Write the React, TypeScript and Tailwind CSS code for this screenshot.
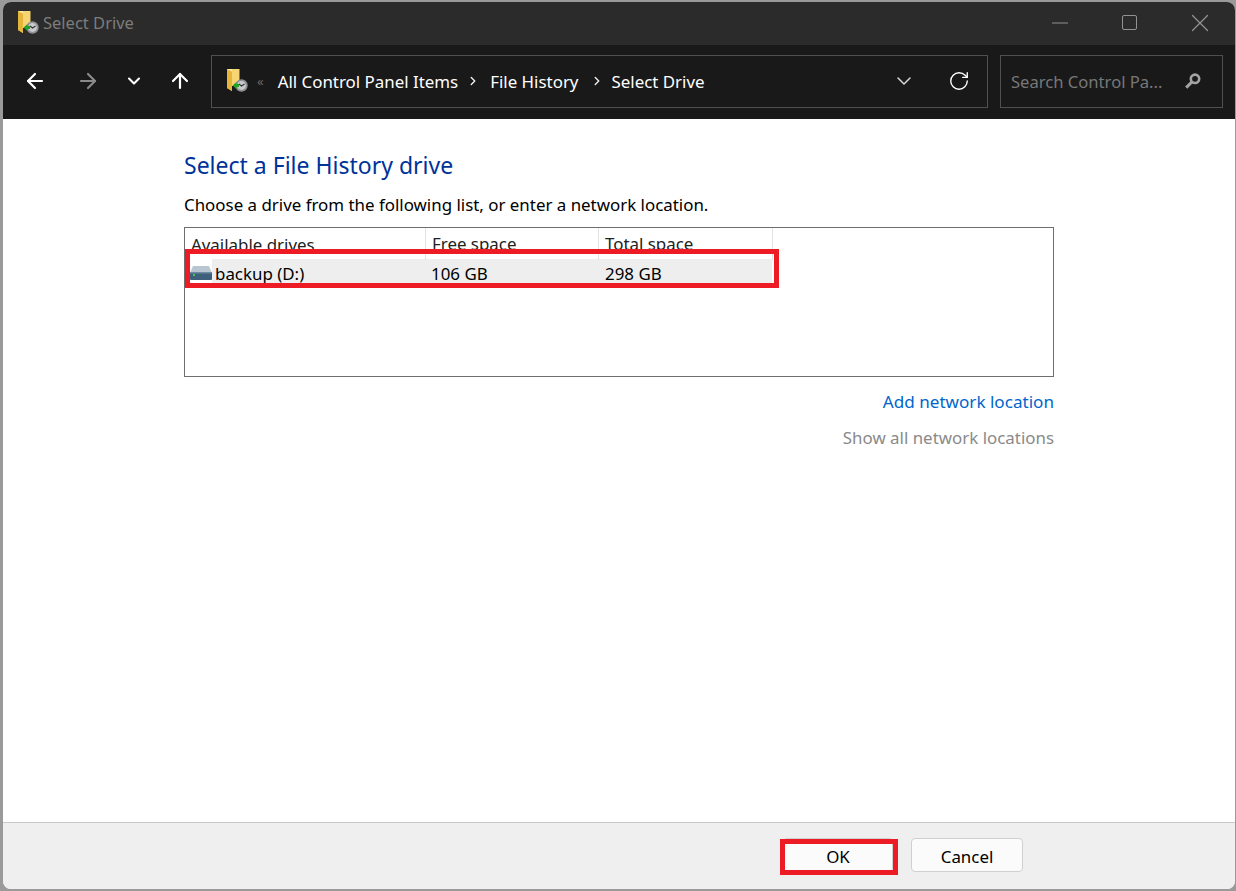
import { ArrowLeft, ArrowRight, ArrowUp, ChevronDown, ChevronRight, RotateCw, Minus, X } from "lucide-react";

// folder with the green arrow and clock badge used by File History
function HistoryFolder() {
  return (
    <svg width="26" height="26" viewBox="0 0 26 26" className="shrink-0">
      <path d="M1 1h12.5v17H6v5l-5-3z" fill="#f6d572" />
      <path d="M1 1l5 2.5V23l-5-3z" fill="#e6b53c" />
      <path d="M1 1h5v2.5z" fill="#fbe9a8" />
      <circle cx="15.5" cy="17.5" r="6.2" fill="#8f9194" />
      <circle cx="15.5" cy="17.5" r="4.4" fill="#c9cacc" />
      <path d="M13 16l2.5 2 3-2" stroke="#333" strokeWidth="1.1" fill="none" />
      <path d="M6.5 17.5l4-3.6v2h2.5v3.2h-2.5v2z" fill="#23a323" />
    </svg>
  );
}

function DriveIcon() {
  return (
    <svg width="24" height="16" viewBox="0 0 24 16" className="shrink-0">
      <path d="M4 1h16l3 7H1z" fill="#b9c6d2" />
      <rect x="1" y="7" width="22" height="8" rx="1" fill="#3f5f7d" />
      <rect x="1" y="7" width="22" height="1.5" fill="#6e8aa3" />
      <rect x="4" y="9" width="2" height="2" fill="#35d04a" />
    </svg>
  );
}

function SearchGlass() {
  return (
    <svg width="18" height="18" viewBox="0 0 18 18" className="shrink-0">
      <circle cx="11" cy="6.8" r="4.2" stroke="#a3a3a3" strokeWidth="2.6" fill="none" />
      <path d="M7.8 10L2.2 15.6" stroke="#a3a3a3" strokeWidth="3" />
    </svg>
  );
}

function DriveRow() {
  return (
    <div className="grid h-[29px] grid-cols-[240px_173px_174px] items-center">
      <div className="flex items-center pl-[4px]">
        <DriveIcon />
        <span className="ml-[2px]">backup (D:)</span>
      </div>
      <span className="pl-[6px]">106 GB</span>
      <span className="pl-[7px]">298 GB</span>
    </div>
  );
}

export default function App() {
  return (
    <div className="relative h-[891px] w-[1236px] overflow-hidden bg-[#9a9a9a] pb-[2px] pl-[3px] pr-px pt-[2px] font-['Noto_Sans',sans-serif] text-[16.9px] text-black">
      <div className="flex h-[887px] flex-col overflow-hidden rounded-lg bg-white">
        {/* Title bar */}
        <div className="flex h-[43px] shrink-0 items-center bg-[#2b2b2b] pb-[2px]">
          <div className="ml-[14px]">
            <HistoryFolder />
          </div>
          <span className="pt-[2px] text-[16.5px] text-[#7c7c7c]">Select Drive</span>
          <div className="ml-auto flex items-center text-[#929292]">
            <Minus size={26} strokeWidth={1} className="mr-[49px]" />
            <span className="mr-[48px] h-[15px] w-[15px] rounded-[2px] border border-[#929292]" />
            <X size={30} strokeWidth={1} className="mr-[20px]" />
          </div>
        </div>

        {/* Toolbar */}
        <div className="flex h-[74px] shrink-0 items-center bg-[#191919] pb-[2px] pl-[20px] pr-[12px] text-white">
          <ArrowLeft size={24} strokeWidth={2.2} />
          <ArrowRight size={24} strokeWidth={2.2} className="ml-[29px] text-[#8a8a8a]" />
          <ChevronDown size={20} strokeWidth={2.5} className="ml-[24px]" />
          <ArrowUp size={24} strokeWidth={2.2} className="ml-[24px]" />
          <div className="ml-[19px] flex h-[53px] w-[777px] items-center border border-[#4f4f4f] pl-[14px]">
            <HistoryFolder />
            <span className="ml-[5px] text-[13px] leading-none text-[#6a6a6a]">«</span>
            <span className="ml-[14px] pt-[2px]">All Control Panel Items</span>
            <ChevronRight size={14} strokeWidth={2.5} className="ml-[8px] text-[#e8e8e8]" />
            <span className="ml-[10px] pt-[2px]">File History</span>
            <ChevronRight size={14} strokeWidth={2.5} className="ml-[12px] text-[#e8e8e8]" />
            <span className="ml-[7px] pt-[2px]">Select Drive</span>
            <ChevronDown size={24} strokeWidth={1.5} className="ml-auto text-[#d8d8d8]" />
            <RotateCw size={22} strokeWidth={1.5} className="ml-[32px] mr-[17px]" />
          </div>
          <div className="ml-[12px] flex h-[53px] flex-1 items-center justify-between border border-[#4f4f4f] pl-[10px] pr-[20px] text-[16.6px] text-[#777777]">
            <span className="pt-[2px]">Search Control Pa...</span>
            <SearchGlass />
          </div>
        </div>

        {/* Content */}
        <div className="flex flex-1 flex-col pl-[181px] pt-[28px]">
          <h1 className="text-[23px] leading-[36px] text-[#003399]">Select a File History drive</h1>
          <p className="mt-[10px] leading-[24px]">Choose a drive from the following list, or enter a network location.</p>

          <div className="mt-[10px] h-[150px] w-[870px] overflow-hidden border border-[#6e6e6e]">
            <div className="grid h-[31px] grid-cols-[240px_173px_175px] items-center text-[#222]">
              <span className="pl-[6px] pt-[1px]">Available drives</span>
              <span className="h-full border-l border-[#e3e3e3] pl-[6px] leading-[32px]">Free space</span>
              <span className="h-full border-x border-[#e3e3e3] pl-[6px] leading-[32px]">Total space</span>
            </div>
            <div className="w-[587px] bg-[linear-gradient(90deg,white_27px,#eeeeee_27px)]">
              <DriveRow />
            </div>
          </div>

          <div className="mt-[13px] flex w-[870px] flex-col items-end">
            <span className="text-[17.1px] leading-[24px] text-[#0066cc]">Add network location</span>
            <span className="mt-[12px] leading-[24px] text-[#8a8a8a]">Show all network locations</span>
          </div>
        </div>

        {/* Footer */}
        <div className="flex h-[67px] shrink-0 items-start justify-end gap-[18px] border-t border-[#c8c8c8] bg-[#efefef] pr-[212px] pt-[15px]">
          <button className="h-[34px] w-[110px] rounded-[4px] border border-[#d0d0d0] bg-[#fbfbfb] pt-[4px]">OK</button>
          <button className="h-[34px] w-[112px] rounded-[4px] border border-[#d0d0d0] bg-[#fbfbfb] pt-[4px]">Cancel</button>
        </div>
      </div>

      {/* Red annotation boxes drawn over the screenshot */}
      <div className="absolute left-[185px] top-[249px] h-[39px] w-[594px] border-[5px] border-[#ed1c24]" />
      <div className="absolute left-[780px] top-[839px] h-[36px] w-[118px] border-[5px] border-[#ed1c24]" />
    </div>
  );
}
